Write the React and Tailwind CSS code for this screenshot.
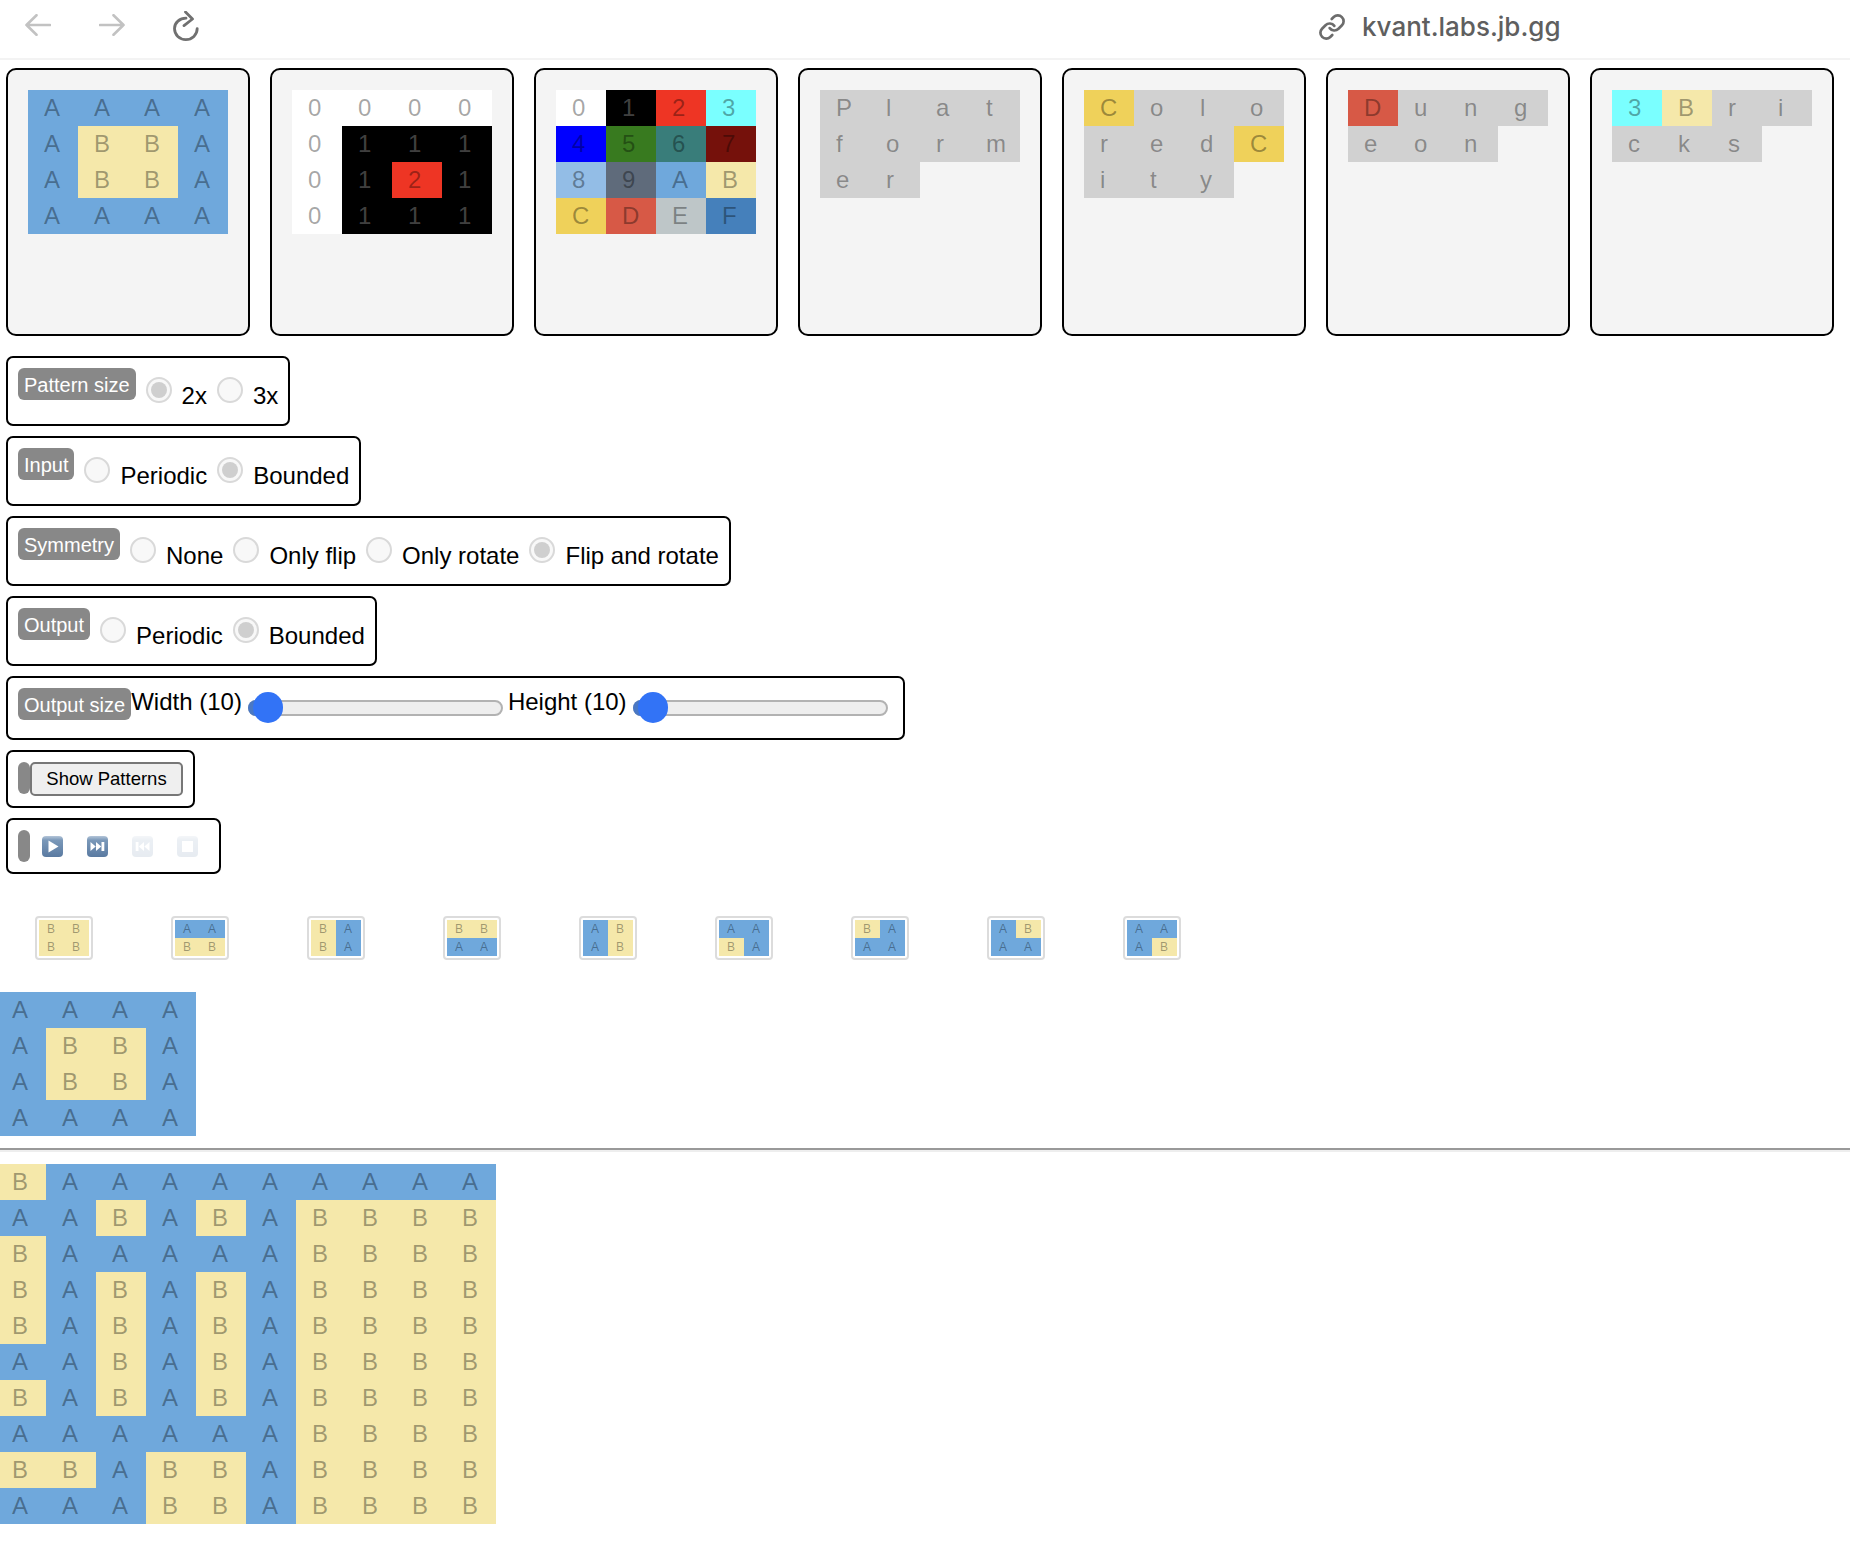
import React from "react";
import { Link } from "lucide-react";

const PALETTE = {
  "0": "#ffffff", "1": "#000000", "2": "#ee3524", "3": "#7affff",
  "4": "#0000ff", "5": "#387a1f", "6": "#397d7a", "7": "#75110b",
  "8": "#93bde6", "9": "#5f6b7b", A: "#6fa8dc", B: "#f5e8aa",
  C: "#efd15a", D: "#d75946", E: "#bec6c8", F: "#4580bb",
};

function Cell({ ch, small }) {
  const bg = PALETTE[ch] || "#d1d1d1";
  return (
    <span
      className={
        small
          ? "block w-[25px] h-[18px] pl-[8px] text-[12px] leading-[18px]"
          : "block w-[50px] h-[36px] pl-[16px] text-[24px] leading-[36px]"
      }
      style={{ backgroundColor: bg, color: ch === "1" ? "rgba(255,255,255,0.27)" : "rgba(0,0,0,0.36)" }}
    >
      {ch}
    </span>
  );
}

function Grid({ rows, small }) {
  return (
    <div className="flex flex-col items-start">
      {rows.map((r, i) => (
        <div key={i} className="flex">
          {r.split("").map((ch, j) => (
            <Cell key={j} ch={ch} small={small} />
          ))}
        </div>
      ))}
    </div>
  );
}

const CARDS = [
  ["AAAA", "ABBA", "ABBA", "AAAA"],
  ["0000", "0111", "0121", "0111"],
  ["0123", "4567", "89AB", "CDEF"],
  ["Plat", "form", "er"],
  ["Colo", "redC", "ity"],
  ["Dung", "eon"],
  ["3Bri", "cks"],
];

const PATTERNS = [
  ["BB", "BB"], ["AA", "BB"], ["BA", "BA"], ["BB", "AA"], ["AB", "AB"],
  ["AA", "BA"], ["BA", "AA"], ["AB", "AA"], ["AA", "AB"],
];

const OUTPUT = [
  "BAAAAAAAAA", "AABABABBBB", "BAAAAABBBB", "BABABABBBB", "BABABABBBB",
  "AABABABBBB", "BABABABBBB", "AAAAAABBBB", "BBABBABBBB", "AAABBABBBB",
];

function Box({ children, className = "" }) {
  return (
    <div className={"ml-[6px] flex items-start w-fit border-2 border-black rounded-[7px] px-[10px] pt-[10px] " + className}>
      {children}
    </div>
  );
}

function Tag({ children }) {
  return (
    <div className="h-[32px] px-[6px] bg-[#888888] text-white rounded-[6px] text-[20px] leading-[34px] whitespace-nowrap">
      {children}
    </div>
  );
}

function Radio({ label, on }) {
  return (
    <div className="flex items-start ml-[10px]">
      <span className="mt-[9px] w-[26px] h-[26px] rounded-full border-2 border-[#d9d9d9] bg-[#f8f8f8] flex items-center justify-center">
        {on && <span className="w-[16px] h-[16px] rounded-full bg-[#cfcfcf]" />}
      </span>
      <span className="ml-[10px] mt-[10px] text-[24px] leading-[36px] text-black whitespace-nowrap">{label}</span>
    </div>
  );
}

function RadioBox({ tag, options, selected }) {
  return (
    <Box className="pb-[10px]">
      <Tag>{tag}</Tag>
      {options.map((o) => (
        <Radio key={o} label={o} on={o === selected} />
      ))}
    </Box>
  );
}

function Slider() {
  return (
    <div className="relative w-[255px] h-[39px] pt-[12px] shrink-0">
      <div className="h-[16px] rounded-full border-2 border-[#b2b2b2] bg-[#eeeeee]" />
      <div className="absolute left-0 top-[12px] w-[20px] h-[16px] rounded-l-full bg-[#4a78c4]" />
      <div className="absolute left-[5px] top-[4px] w-[30px] h-[31px] rounded-full bg-[#3273f6]" />
    </div>
  );
}

function MediaIcon({ id, dim, children }) {
  return (
    <svg width="21" height="21" viewBox="0 0 21 21" className="block" style={{ opacity: dim ? 0.14 : 1 }}>
      <defs>
        <linearGradient id={id} x1="0" y1="0" x2="0" y2="1">
          <stop offset="0" stopColor="#b4c5d8" />
          <stop offset="0.2" stopColor="#7a98b9" />
          <stop offset="1" stopColor="#5a7aa1" />
        </linearGradient>
      </defs>
      <rect x="0" y="0" width="21" height="21" rx="4" fill={`url(#${id})`} />
      {children}
    </svg>
  );
}

export default function App() {
  return (
    <div className="w-[1850px] h-[1556px] overflow-hidden bg-white font-['Liberation_Sans',Arial,sans-serif]">
      <div className="h-[60px] border-b-2 border-[#f3f3f3] flex items-start">
        <svg width="26" height="22" viewBox="0 0 26 22" fill="none" stroke="#c2c2c2" strokeWidth="2.6" strokeLinecap="round" strokeLinejoin="round" className="ml-[25px] mt-[14px]">
          <path d="M1.5 11H25M11.5 1.2 1.5 11l10 9.8" />
        </svg>
        <svg width="26" height="22" viewBox="0 0 26 22" fill="none" stroke="#c2c2c2" strokeWidth="2.6" strokeLinecap="round" strokeLinejoin="round" className="ml-[48px] mt-[14px]">
          <path d="M24.5 11H1M14.5 1.2 24.5 11l-10 9.8" />
        </svg>
        <svg width="26" height="30" viewBox="0 0 26 30" fill="none" stroke="#707070" strokeWidth="2.8" strokeLinecap="round" strokeLinejoin="round" className="ml-[48px] mt-[11px]">
          <path d="M13 7.2C6.8 7.2 1.5 11.6 1.5 17.6 1.5 24 6.6 28.6 12.8 28.6 19.2 28.6 24.2 23.8 24.2 17.6" />
          <path d="M12.5 1 19.5 8 11 14.6" />
        </svg>
        <Link size={28} strokeWidth={2.3} color="#6c6c6c" className="ml-[1119px] mt-[13px]" />
        <div className="ml-[16px] mt-[9px] text-[26px] leading-[36px] font-medium text-[#5f5f5f] font-['Inter',sans-serif] whitespace-nowrap">
          kvant.labs.jb.gg
        </div>
      </div>

      <div className="flex gap-[20px] pl-[6px] pt-[8px]">
        {CARDS.map((rows, i) => (
          <div key={i} className="w-[244px] h-[268px] shrink-0 border-2 border-black rounded-[10px] bg-[#f4f4f4] p-[20px]">
            <Grid rows={rows} />
          </div>
        ))}
      </div>

      <div className="flex flex-col items-start gap-[10px] mt-[20px]">
        <RadioBox tag="Pattern size" options={["2x", "3x"]} selected="2x" />
        <RadioBox tag="Input" options={["Periodic", "Bounded"]} selected="Bounded" />
        <RadioBox tag="Symmetry" options={["None", "Only flip", "Only rotate", "Flip and rotate"]} selected="Flip and rotate" />
        <RadioBox tag="Output" options={["Periodic", "Bounded"]} selected="Bounded" />

        <Box className="h-[64px]">
          <Tag>Output size</Tag>
          <span className="-mt-[4px] text-[24px] leading-[36px] whitespace-nowrap">Width (10)</span>
          <div className="ml-[6px]"><Slider /></div>
          <span className="ml-[5px] -mt-[4px] text-[24px] leading-[36px] whitespace-nowrap">Height (10)</span>
          <div className="ml-[6px] mr-[5px]"><Slider /></div>
        </Box>

        <Box className="h-[58px]">
          <div className="w-[12px] h-[32px] bg-[#888888] rounded-[6px]" />
          <button className="w-[153px] h-[34px] border-2 border-[#777777] rounded-[5px] bg-[#efefef] text-[18.5px] leading-[28px] text-black text-center">
            Show Patterns
          </button>
        </Box>

        <Box className="h-[56px]">
          <div className="w-[12px] h-[32px] bg-[#888888] rounded-[6px]" />
          <div className="flex gap-[24px] ml-[12px] mr-[11px] mt-[6px]">
            <MediaIcon id="m1">
              <path d="M6.5 4.5v12l10-6z" fill="#ffffff" />
            </MediaIcon>
            <MediaIcon id="m2">
              <path d="M3.5 6v9l5.2-4.5zM9 6v9l5.2-4.5z" fill="#ffffff" />
              <rect x="14.5" y="6" width="2.8" height="9" fill="#ffffff" />
            </MediaIcon>
            <MediaIcon id="m3" dim>
              <rect x="3.7" y="6" width="2.8" height="9" fill="#ffffff" />
              <path d="M12 6v9l-5.2-4.5zM17.5 6v9l-5.2-4.5z" fill="#ffffff" />
            </MediaIcon>
            <MediaIcon id="m4" dim>
              <rect x="5" y="5" width="11" height="11" fill="#ffffff" />
            </MediaIcon>
          </div>
        </Box>
      </div>

      <div className="flex gap-[78px] pl-[35px] mt-[42px]">
        {PATTERNS.map((p, i) => (
          <div key={i} className="w-[58px] h-[44px] shrink-0 border-2 border-[#dcdcdc] rounded-[4px] p-[2px]">
            <Grid rows={p} small />
          </div>
        ))}
      </div>

      <div className="-ml-[4px] mt-[32px]">
        <Grid rows={CARDS[0]} />
      </div>

      <div className="mt-[12px] border-t-2 border-t-[#999999] border-b-2 border-b-[#eeeeee]" />

      <div className="-ml-[4px] mt-[12px]">
        <Grid rows={OUTPUT} />
      </div>
    </div>
  );
}
